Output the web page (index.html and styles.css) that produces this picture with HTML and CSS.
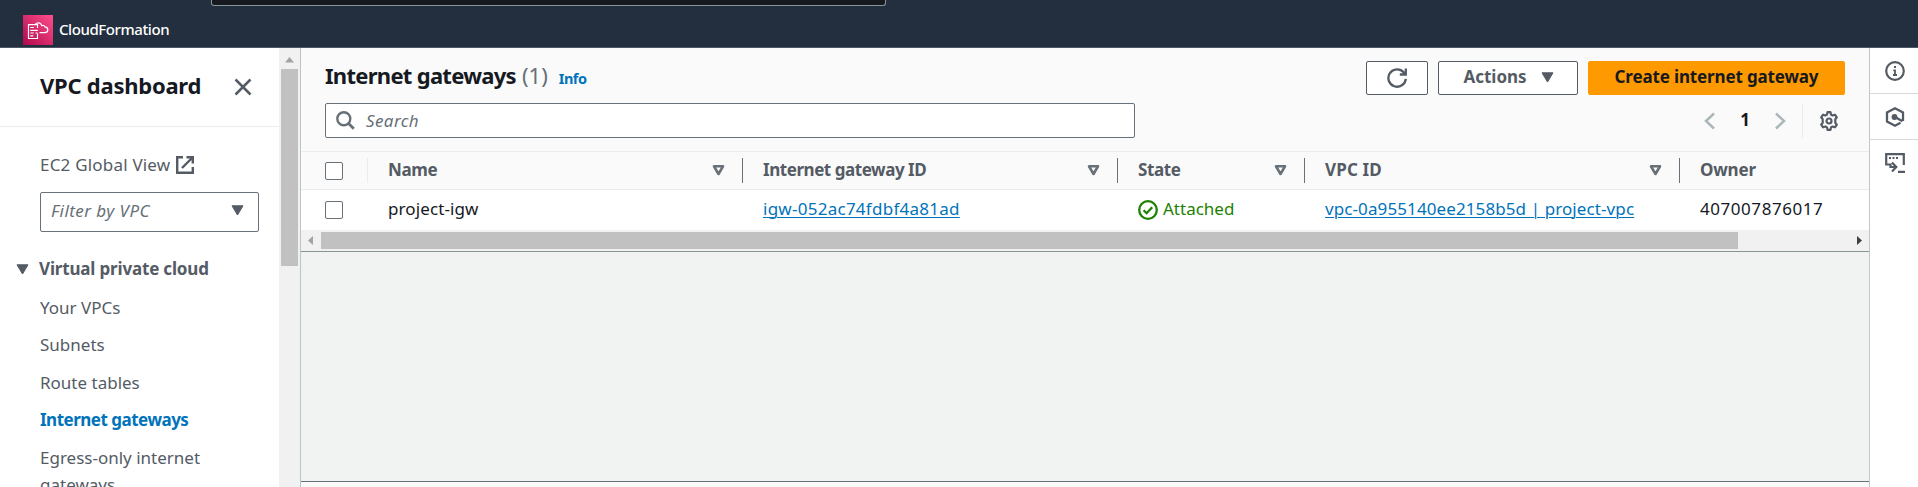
FILE: index.html
```
<!DOCTYPE html>
<html lang="en">
<head>
<meta charset="utf-8">
<title>Internet gateways | VPC dashboard</title>
<link rel="stylesheet" href="styles.css">
</head>
<body>
<header class="topbar">
  <div class="topbar-search"></div>
  <div class="favorites">
    <svg class="service-icon" width="30" height="30" viewBox="0 0 30 30">
      <defs><linearGradient id="pink" x1="0" y1="1" x2="1" y2="0"><stop offset="0" stop-color="#b0084d"/><stop offset="1" stop-color="#ff4f8b"/></linearGradient></defs>
      <rect width="30" height="30" fill="url(#pink)"/>
      <g fill="none" stroke="#fff" stroke-width="1.2">
        <path d="M11.500 9.600H5.500V23.500h9V18.500M14.500 13v-3.400h-3"/>
        <path d="M7.300 12.500h3.500M7.300 15.300h7.500M7.300 18h3.500M7.300 20.800h3M12.500 18h2"/>
        <path d="M16.500 17.600h5.100c2 0 3.200-1.200 3.200-2.900 0-1.800-1.300-2.800-2.900-2.900-.3-1.300-1.800-1.900-3-1.100-.9-2.500-3.200-3.500-5.300-2.500-.7.300-1.200.8-1.500 1.400"/>
      </g>
    </svg>
    <span class="service-name">CloudFormation</span>
  </div>
</header>
<div class="shell">
  <nav class="sidebar">
    <div class="side-head">
      <h2 class="side-title">VPC dashboard</h2>
      <svg class="close" width="18" height="18" viewBox="0 0 18 18"><path d="M1.500 1.500l15 15M16.500 1.500l-15 15" stroke="#545b64" stroke-width="2.500"/></svg>
    </div>
    <div class="global-view"><span class="t-global">EC2 Global View</span>
      <svg width="18" height="18" viewBox="0 0 18 18" fill="none" stroke="#545b64" stroke-width="2.400"><path d="M7 1.200H1.200v15.600h15.600V11M10.500 1.200h6.300v6.300M16.500 1.500L6 12"/></svg>
    </div>
    <div class="select"><span class="t-filter">Filter by VPC</span><svg width="13" height="11" viewBox="0 0 13 11"><path d="M1 .8h11L6.500 10z" fill="#545b64" stroke="#545b64" stroke-linejoin="round"/></svg></div>
    <div class="group"><svg width="13" height="11" viewBox="0 0 13 11"><path d="M1 .8h11L6.500 10z" fill="#545b64" stroke="#545b64" stroke-linejoin="round"/></svg><span class="t-group">Virtual private cloud</span></div>
    <ul class="links">
      <li>Your VPCs</li>
      <li>Subnets</li>
      <li>Route tables</li>
      <li class="active">Internet gateways</li>
      <li>Egress-only internet<br>gateways</li>
    </ul>
  </nav>
  <div class="vscroll">
    <svg width="9" height="6" viewBox="0 0 9 6"><path d="M0 5.500L4.500 0 9 5.500z" fill="#a3a3a3"/></svg>
    <div class="vthumb"></div>
  </div>
  <main class="main">
    <section class="tools">
      <div class="title-row">
        <h1 class="title">Internet gateways</h1><span class="count">(1)</span><span class="info">Info</span>
        <div class="actions">
          <div class="btn refresh"><svg width="20" height="20" viewBox="0 0 20 20" fill="none" stroke="#545b64" stroke-width="2.300"><path d="M18.800 10.800A8.700 8.700 0 1 1 16.600 4.200L18.200 6M18.800 .5v6h-6"/></svg></div>
          <div class="btn menu"><span class="t-actions">Actions</span><svg width="13" height="11" viewBox="0 0 13 11"><path d="M1 .8h11L6.500 10z" fill="#545b64" stroke="#545b64" stroke-linejoin="round"/></svg></div>
          <div class="btn primary"><span class="t-create">Create internet gateway</span></div>
        </div>
      </div>
      <div class="filter-row">
        <div class="search"><svg width="19" height="19" viewBox="0 0 19 19" fill="none" stroke="#687078"><circle cx="7.800" cy="7.800" r="6.500" stroke-width="2.400"/><path d="M12.300 12.300l5.500 5.500" stroke-width="2.800"/></svg><span class="t-search">Search</span></div>
        <div class="pager">
          <svg width="11" height="18" viewBox="0 0 11 18"><path d="M10 1.500L2 9l8 7.500" fill="none" stroke="#aab7b8" stroke-width="2.500"/></svg>
          <span class="page">1</span>
          <svg width="11" height="18" viewBox="0 0 11 18"><path d="M1 1.500L9 9l-8 7.500" fill="none" stroke="#aab7b8" stroke-width="2.500"/></svg>
        </div>
        <div class="settings">
          <svg width="20" height="20" viewBox="0 0 20 20" fill="none" stroke="#545b64" stroke-width="2.200" stroke-linejoin="round"><path d="M8 3.600L8.500 1.200h3l.5 2.400 1.600.9 2.300-.8 1.900 2.600-1.500 1.900v3.600l1.500 1.900-1.900 2.600-2.300-.8-1.600.9-.5 2.400h-3L8 16.400l-1.600-.9-2.300.8-1.900-2.600 1.500-1.900V8.200L2.200 6.300l1.900-2.600 2.300.8z"/><circle cx="10" cy="10" r="2.500"/></svg>
        </div>
      </div>
    </section>
    <div class="grid head">
      <div class="cell pick"><span class="box"></span></div>
      <div class="cell"><span class="h-name">Name</span><svg class="sort" width="13" height="11" viewBox="0 0 13 11"><path d="M2 1.300h9L6.500 9z"/></svg></div>
      <div class="cell"><span class="h-igw">Internet gateway ID</span><svg class="sort" width="13" height="11" viewBox="0 0 13 11"><path d="M2 1.300h9L6.500 9z"/></svg></div>
      <div class="cell"><span class="h-state">State</span><svg class="sort" width="13" height="11" viewBox="0 0 13 11"><path d="M2 1.300h9L6.500 9z"/></svg></div>
      <div class="cell"><span class="h-vpc">VPC ID</span><svg class="sort" width="13" height="11" viewBox="0 0 13 11"><path d="M2 1.300h9L6.500 9z"/></svg></div>
      <div class="cell"><span class="h-owner">Owner</span></div>
    </div>
    <div class="grid row">
      <div class="cell pick"><span class="box"></span></div>
      <div class="cell"><span class="c-name">project-igw</span></div>
      <div class="cell"><a class="c-igw">igw-052ac74fdbf4a81ad</a></div>
      <div class="cell state"><svg width="20" height="20" viewBox="0 0 20 20" fill="none" stroke="#1d8102" stroke-width="2.300"><circle cx="10" cy="10" r="8.800"/><path d="M5.600 10.200l3 3 5.600-6"/></svg><span class="c-state">Attached</span></div>
      <div class="cell"><a class="c-vpc">vpc-0a955140ee2158b5d | project-vpc</a></div>
      <div class="cell"><span class="c-owner">407007876017</span></div>
    </div>
    <div class="hscroll">
      <svg width="5" height="9" viewBox="0 0 5 9"><path d="M5 0L0 4.500 5 9z" fill="#a3a3a3"/></svg>
      <div class="hthumb"></div>
      <svg width="5" height="9" viewBox="0 0 5 9"><path d="M0 0l5 4.500L0 9z" fill="#404040"/></svg>
    </div>
    <div class="split"></div>
  </main>
  <aside class="rail">
    <div class="tool"><svg width="20" height="20" viewBox="0 0 20 20" fill="none" stroke="#545b64" stroke-width="2.200"><circle cx="10" cy="10" r="8.800"/><path d="M10 8.500v5M8.300 9.300H10M8 14h4" stroke-width="1.800"/><path d="M9 6h2" stroke-width="2"/></svg></div>
    <div class="tool"><svg width="20" height="20" viewBox="0 0 20 20" fill="none" stroke="#545b64" stroke-width="2.300"><path d="M18 14V5.500L10 1.300 2 5.500v9l8 4.200 5.500-3M17.500 14.200L10 10"/><circle cx="9.500" cy="10" r="1.800" fill="#545b64"/></svg></div>
    <div class="tool last"><svg width="20" height="20" viewBox="0 0 20 20" fill="none" stroke="#545b64" stroke-width="2.200"><path d="M5.500 11.500H1.200V1.200h17.600V12M5.500 10.500V14h5.500M7 9.500l4.300 4.500L7 18.500M13 18.800h7"/><path d="M4 5h2M7.500 5h2M11 5h2" stroke-width="2"/></svg></div>
  </aside>
</div>
</body>
</html>
```
FILE: styles.css
```
* { box-sizing: border-box; }
body {
  margin: 0;
  width: 1918px;
  height: 487px;
  overflow: hidden;
  font-family: "Noto Sans", "Open Sans", sans-serif;
  font-size: 17px;
  color: #16191f;
  background: #fff;
}
svg { display: block; flex: none; }
span, a, h1, h2, li { white-space: nowrap; }
.topbar { height: 48px; background: #232f3e; border-bottom: 1px solid #4b5563; }
.topbar-search {
  width: 675px; height: 6px; margin-left: 211px;
  background: #16191f; border: 1px solid #879596; border-top: 0;
  border-radius: 0 0 3px 3px;
}
.favorites { display: flex; align-items: center; gap: 6px; height: 39px; padding: 9px 0 0 23px; }
.service-name { color: #fff; font-size: 15px; font-weight: 500; line-height: 28px; letter-spacing: -.42px; padding-bottom: 2px; }
.shell { display: flex; height: 439px; }

.sidebar { width: 279px; overflow: hidden; color: #545b64; }
.side-head {
  display: flex; justify-content: space-between; align-items: center;
  height: 79px; padding: 0 27px 0 40px; border-bottom: 1px solid #eaeded;
}
.side-title { margin: 0; padding-bottom: 4px; font-size: 22px; line-height: 30px; font-weight: 700; letter-spacing: -.25px; color: #16191f; }
.global-view { display: flex; align-items: center; gap: 6px; height: 28px; margin: 24px 0 0 40px; }
.t-global { letter-spacing: .2px; padding-bottom: 2px; }
.t-filter { letter-spacing: .45px; }
.select {
  display: flex; justify-content: space-between; align-items: center;
  width: 219px; height: 40px; margin: 13px 0 0 40px; padding: 0 14px 3px 10px;
  border: 1px solid #687078; border-radius: 2px; font-style: italic; color: #687078;
}
.group { display: flex; align-items: center; gap: 10px; height: 28px; margin: 23px 0 0 16px; font-weight: 700; }
.t-group { letter-spacing: -.17px; padding-bottom: 2px; }
.links { list-style: none; margin: 11px 0 0 40px; padding: 0; }
.links li { line-height: 27px; margin-bottom: 10.400px; }
.links .active { font-weight: 700; color: #0073bb; letter-spacing: -.5px; }

.vscroll { width: 21px; background: #f1f1f1; padding: 9px 0 0 2px; }
.vscroll svg { margin-left: 4px; }
.vthumb { width: 17px; height: 197px; margin-top: 6px; background: #c1c1c1; }

.main { width: 1569px; border-left: 1px solid #bcc5c6; background: #fafafa; }
.tools { height: 104px; padding: 13px 24px 0; border-bottom: 1px solid #eaeded; }
.title-row { display: flex; align-items: center; height: 34px; }
.title { margin: 0; padding-bottom: 6px; font-size: 22px; line-height: 30px; font-weight: 700; letter-spacing: -.71px; }
.count { margin-left: 6px; padding-bottom: 6px; font-size: 22px; color: #687078; }
.info { margin-left: 11px; font-size: 14.500px; font-weight: 700; letter-spacing: -.5px; color: #0073bb; }
.actions { display: flex; gap: 10px; margin-left: auto; }
.btn {
  display: flex; align-items: center; justify-content: center; height: 34px;
  border: 1px solid #545b64; border-radius: 2px; background: #fff;
  color: #545b64; font-weight: 700; padding-bottom: 2px;
}
.refresh { width: 62px; padding: 0; }
.menu { width: 140px; gap: 14px; padding-left: 1px; }
.primary { width: 257px; background: #f90; border-color: #f90; color: #16191f; letter-spacing: -.15px; }
.t-actions, .t-create { padding-bottom: 1px; }
.filter-row { display: flex; align-items: center; height: 35px; margin-top: 8px; }
.search {
  display: flex; align-items: center; gap: 11px; width: 810px; height: 35px; padding-left: 10px;
  border: 1px solid #687078; border-radius: 2px; background: #fff; font-style: italic; color: #687078;
}
.t-search { letter-spacing: .4px; }
.pager { display: flex; align-items: center; gap: 25px; margin-left: auto; }
.page { font-size: 17px; font-weight: 700; width: 10px; text-align: center; padding-bottom: 2px; }
.settings { border-left: 1px solid #eaeded; height: 34px; margin-left: 16px; padding: 7px 6px 0 16px; }

.grid { display: grid; grid-template-columns: 67px 375px 375px 187px 375px 189px; align-items: center; }
.head { height: 38px; border-bottom: 1px solid #eaeded; font-weight: 700; color: #545b64; }
.row { height: 40px; background: #fff; }
.cell { display: flex; align-items: center; justify-content: space-between; padding: 0 18px 0 20px; height: 25px; }
.head .cell > span:not(.box) { padding-bottom: 2px; }
.row .cell > span:not(.box), .row .cell > a { padding-bottom: 4px; }
.head .cell { border-right: 1px solid #687078; padding-right: 17px; }
.head .cell:last-child { border-right: 0; }
.head .pick { border-right-color: #eaeded; }
.cell.pick { padding-left: 24px; }
.box { width: 18px; height: 18px; border: 1px solid #687078; border-radius: 2px; background: #fff; }
.sort path { fill: none; stroke: #687078; stroke-width: 2.600; stroke-linejoin: round; }
.cell a { color: #0073bb; text-decoration: underline; text-underline-offset: 2px; text-decoration-thickness: 1px; }
.h-name { letter-spacing: -.4px; }
.h-igw { letter-spacing: -.45px; }
.h-state { letter-spacing: -.4px; }
.h-vpc { letter-spacing: .15px; }
.h-owner { letter-spacing: -.2px; }
.c-name { letter-spacing: .1px; }
.c-igw { letter-spacing: .26px; }
.c-vpc { letter-spacing: .1px; }
.c-owner { letter-spacing: .55px; }
.state { justify-content: flex-start; gap: 5px; color: #1d8102; }

.hscroll { display: flex; align-items: center; height: 21px; padding: 0 7px; background: #f1f1f1; }
.hthumb { width: 1417px; height: 17px; margin: 0 auto 0 8px; background: #c1c1c1; }
.split { height: 231px; background: #f1f3f3; border-top: 1px solid #879596; border-bottom: 1px solid #687078; }
.rail { width: 49px; border-left: 1px solid #c0c8c9; background: #fff; }
.tool { height: 46px; display: flex; align-items: center; justify-content: center; border-bottom: 1px solid #d5dbdb; padding-left: 2px; }
.last { border: 0; }
```
